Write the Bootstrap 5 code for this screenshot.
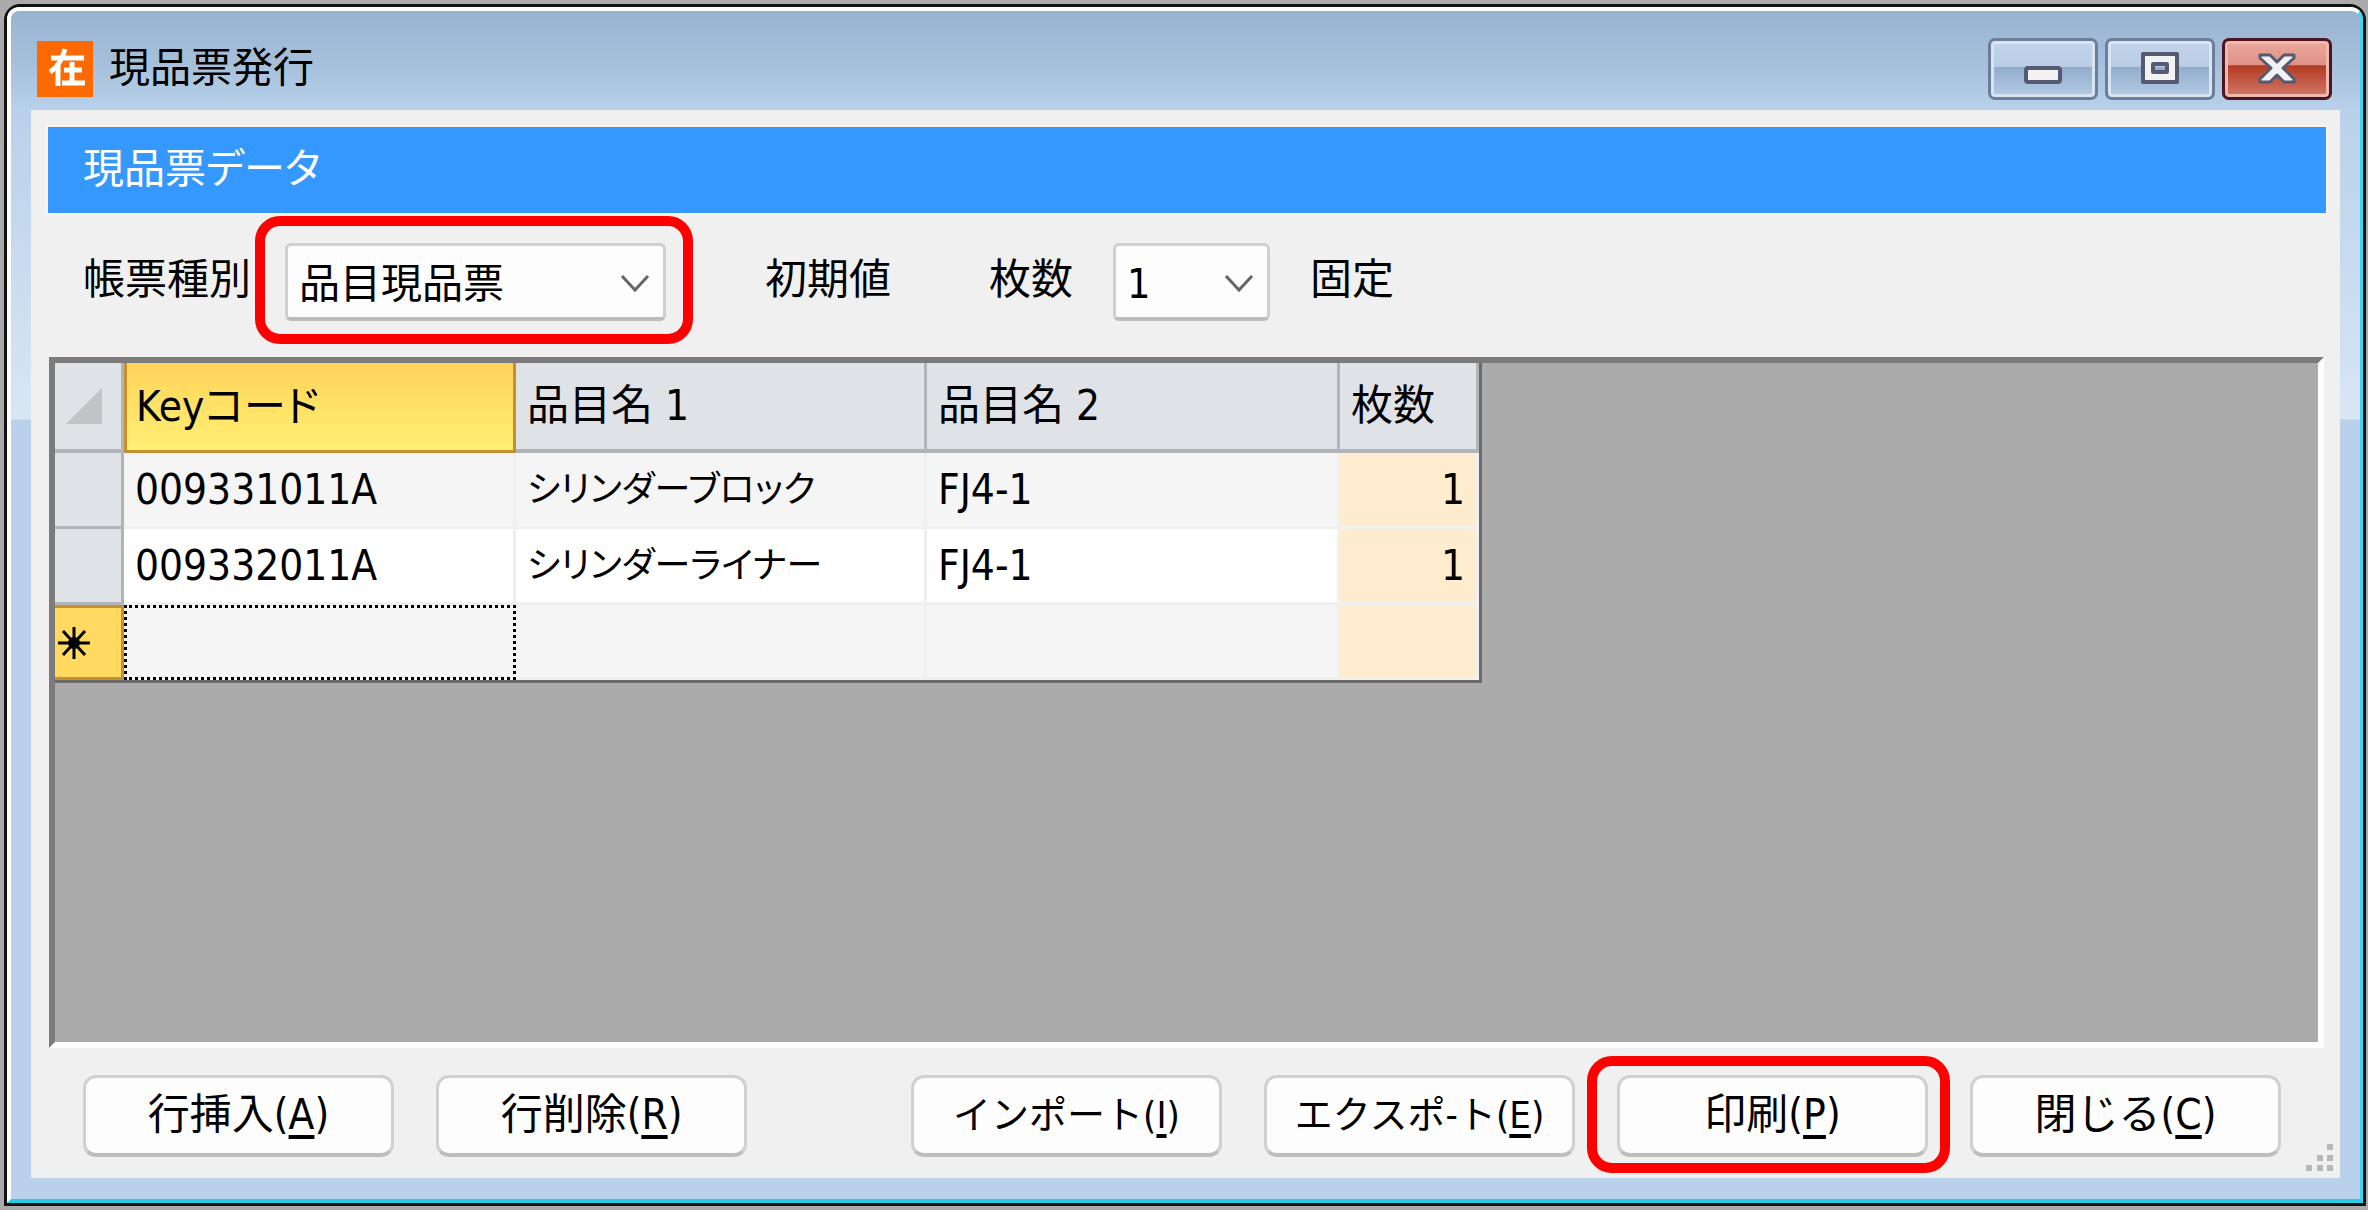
<!DOCTYPE html>
<html lang="ja">
<head>
<meta charset="utf-8">
<meta name="viewport" content="width=device-width, initial-scale=1">
<title>現品票発行</title>
<link rel="stylesheet" href="https://cdn.jsdelivr.net/npm/bootstrap@5.3.0/dist/css/bootstrap.min.css">
<style>
  body { background: #ababab; color: #000; font-family: "DejaVu Sans Condensed", "Noto Sans", "Noto Sans CJK JP", sans-serif; font-size: 42px; line-height: 50px; font-feature-settings: "palt"; }
  .desk { padding: 4px 2px 4px 4px; }
  .win { border: 3px solid #111; border-radius: 16px 16px 0 0; }
  .win-edge { border: 4px solid #fff; border-right: 3px solid #3fd6f5; border-bottom-color: #25cfe6; border-radius: 12px 12px 0 0; padding: 0 20px 21px 20px;
    background: linear-gradient(#99b4d1 0, #a5bfdb 50px, #b9d1ea 100px, #d9e6f4 408px, #b9d1ea 409px); }
  .titlebar { height: 99px; padding: 16px 8px 0 6px; }
  .win-title { font-size: 41px; }
  .app-icon { width: 56px; height: 56px; }
  .caption-btns { gap: 7px; }
  .cap-btn { width: 110px; height: 62px; padding: 0; border: 3px solid #6d7e9b; border-radius: 7px; box-shadow: inset 0 0 0 3px #d8e4f2;
    background: linear-gradient(#c2d4ea 0, #b9cde5 46%, #92adcb 47%, #b3cce6 100%); }
  .cap-btn svg, .app-icon, .row-mark { display: block; margin: 0 auto; }
  .cap-close { border-color: #4d1522; box-shadow: inset 0 0 0 3px #edb9b0;
    background: linear-gradient(#eaa99d 0, #df9286 43%, #b43a22 44%, #d17a68 100%); }
  .panel { background: #f0f0f0; padding: 17px 14px 0 17px; }
  .banner { background: #3498ff; color: #fff; height: 86px; padding-left: 35px; font-size: 41px; outline: 2px solid #fbf3e9; }
  .form-bar { height: 144px; padding: 2px 0 8px 35px; }
  .form-bar label, .form-bar > span { padding-bottom: 4px; }
  .combo select.form-select { width: 100%; height: 78px; padding: 4px 50px 0 11px; border: 3px solid #cfcfcf; border-bottom: 4px solid #bdbdbd; border-radius: 6px;
    background: #fdfdfd none; color: #000; font-size: 41px; line-height: 50px; }
  .combo svg { right: 16px; top: 31px; pointer-events: none; }
  .combo-kind { width: 381px; margin-left: 34px; }
  .combo-count { width: 157px; margin: 0 40px 0 40px; }
  .lbl-init { margin: 0 98px 0 99px; }
  .marked::after { content: ""; position: absolute; inset: -27px -27px -23px -30px; border: 10px solid #f00; border-radius: 25px; pointer-events: none; }
  .marked-btn::after { inset: -19px -22px -16px -30px; }
  .grid-view { background: #ababab; margin: 0 2px 0 1px; border-style: solid; border-width: 6px; border-color: #7b7b7b #fff #fff #7b7b7b; }
  .sheet { width: 1427px; table-layout: fixed; border-collapse: separate; border-spacing: 0; border-right: 3px solid #6b6b6b; border-bottom: 3px solid #6b6b6b; }
  .sheet th { font-weight: 400; }
  .sheet thead th { height: 90px; background: #dfe2e7; border-right: 3px solid #b1b5ba; border-bottom: 4px solid #b1b5ba; padding: 0 11px; }
  .sheet tbody th { height: 76px; background: #dfe2e7; border-right: 3px solid #b1b5ba; border-bottom: 3px solid #b1b5ba; padding: 0 3px; }
  .sheet tbody td { height: 76px; background: #f5f5f5; border-right: 3px solid #f0f0f0; border-bottom: 3px solid #f0f0f0; padding: 0 11px; }
  .sheet tbody td.kana { font-size: 36px; }
  .sheet tbody tr:nth-child(2) td { background: #fff; }
  .sheet tbody td.qty, .sheet tbody tr:nth-child(2) td.qty { background: #ffebcd; text-align: right; }
  .sheet thead th.key-head { background: linear-gradient(#ffd35a, #fff073); border: 3px solid #c68f2f; border-top: 0; padding-left: 9px; }
  .sheet tbody th.new-row { height: 75px; background: #ffd960; border-right-color: #c68f2f; border-top: 3px solid #c68f2f; border-bottom-color: #c68f2f; }
  .sheet tbody tr:last-child td { height: 75px; }
  .sheet tbody td.focus-cell { border: 3px dotted #000; }
  .foot { height: 130px; padding: 5px 45px 0 35px; gap: 42px; }
  .cmd { width: 311px; height: 82px; padding: 0; background: #fdfdfd; border: 3px solid #d0d0d0; border-bottom: 4px solid #bdbdbd; border-radius: 13px; font-size: 42px; line-height: 50px; color: #000; }
  .cmd-kana { font-size: 38px; }
  .cmd u { text-underline-offset: 6px; text-decoration-thickness: 4px; }
  .grip { right: 6px; bottom: 6px; }
</style>
</head>
<body>
<div class="desk min-vh-100 d-flex">
 <div class="win flex-grow-1 d-flex">
  <div class="win-edge flex-grow-1 d-flex flex-column">
   <header class="titlebar d-flex align-items-center">
    <svg class="app-icon m-0" viewBox="0 0 56 56" aria-hidden="true"><rect width="56" height="56" fill="#ff6a00"/><g fill="none" stroke="#fff" stroke-width="5"><path d="M14 17H47M28 8Q24 24 13 31M21 24V45M35 21V42M27 29H45M25 42H48"/></g></svg>
    <h1 class="win-title m-0 ms-3 fw-normal flex-grow-1">現品票発行</h1>
    <div class="caption-btns d-flex">
     <button class="cap-btn" type="button" aria-label="最小化"><svg width="40" height="36" viewBox="0 0 40 36"><rect x="3" y="17" width="34" height="14" rx="2" fill="#f2f2f2" stroke="#565a70" stroke-width="4"/></svg></button>
     <button class="cap-btn" type="button" aria-label="最大化"><svg width="40" height="36" viewBox="0 0 40 36"><path d="M3 3H37V31H3ZM13 13V21H27V13Z" fill="#f2f2f2" fill-rule="evenodd" stroke="#565a70" stroke-width="4" stroke-linejoin="round"/></svg></button>
     <button class="cap-btn cap-close" type="button" aria-label="閉じる"><svg width="40" height="36" viewBox="0 0 40 36"><path d="M3 4H13L20 11L27 4H37V7L26 17L37 28V31H27L20 24L13 31H3V28L14 17L3 7Z" fill="#f2f2f2" stroke="#565a70" stroke-width="3" stroke-linejoin="round"/></svg></button>
    </div>
   </header>
   <main class="panel flex-grow-1 d-flex flex-column position-relative">
    <h2 class="banner m-0 fw-normal d-flex align-items-center flex-shrink-0">現品票データ</h2>
    <form class="form-bar d-flex align-items-center flex-shrink-0">
     <label for="kind">帳票種別</label>
     <div class="combo combo-kind marked position-relative">
      <select class="form-select" id="kind"><option>品目現品票</option></select>
      <svg class="position-absolute" width="30" height="20" viewBox="0 0 30 20"><path d="M2 2L15 16L28 2" fill="none" stroke="#666" stroke-width="3"/></svg>
     </div>
     <span class="lbl-init">初期値</span>
     <label for="count">枚数</label>
     <div class="combo combo-count position-relative">
      <select class="form-select" id="count"><option>1</option></select>
      <svg class="position-absolute" width="30" height="20" viewBox="0 0 30 20"><path d="M2 2L15 16L28 2" fill="none" stroke="#666" stroke-width="3"/></svg>
     </div>
     <span>固定</span>
    </form>
    <div class="grid-view flex-grow-1">
     <table class="sheet">
      <colgroup><col style="width:69px"><col style="width:392px"><col style="width:411px"><col style="width:413px"><col style="width:139px"></colgroup>
      <thead>
       <tr>
        <th aria-label="全選択"><svg class="d-block" width="36" height="36" viewBox="0 0 36 36"><path d="M36 0V36H0Z" fill="#c0c4c7"/></svg></th>
        <th class="key-head" scope="col">Keyコード</th><th scope="col">品目名 1</th><th scope="col">品目名 2</th><th scope="col">枚数</th>
       </tr>
      </thead>
      <tbody>
       <tr><th></th><td>009331011A</td><td class="kana">シリンダーブロック</td><td>FJ4-1</td><td class="qty">1</td></tr>
       <tr><th></th><td>009332011A</td><td class="kana">シリンダーライナー</td><td>FJ4-1</td><td class="qty">1</td></tr>
       <tr><th class="new-row" aria-label="新しい行"><svg class="row-mark m-0" width="32" height="32" viewBox="0 0 32 32"><path d="M16 0V32M0 16H32M5 4L27 28M27 4L5 28" stroke="#000" stroke-width="3"/><circle cx="16" cy="16" r="6"/></svg></th><td class="focus-cell"></td><td></td><td></td><td class="qty"></td></tr>
      </tbody>
     </table>
    </div>
    <footer class="foot d-flex align-items-center flex-shrink-0">
     <button class="btn cmd" type="button">行挿入(<u>A</u>)</button>
     <button class="btn cmd" type="button">行削除(<u>R</u>)</button>
     <button class="btn cmd cmd-kana ms-auto" type="button">インポート(<u>I</u>)</button>
     <button class="btn cmd cmd-kana" type="button">エクスポ-ト(<u>E</u>)</button>
     <div class="marked marked-btn position-relative"><button class="btn cmd d-block" type="button">印刷(<u>P</u>)</button></div>
     <button class="btn cmd" type="button">閉じる(<u>C</u>)</button>
    </footer>
    <svg class="grip position-absolute" width="28" height="28" viewBox="0 0 28 28" aria-hidden="true"><path d="M21 0h6v6h-6zM11 11h6v6h-6zM21 11h6v6h-6zM0 21h6v6H0zM11 21h6v6h-6zM21 21h6v6h-6z" fill="#b8b8b8"/></svg>
   </main>
  </div>
 </div>
</div>
<script src="https://cdn.jsdelivr.net/npm/bootstrap@5.3.0/dist/js/bootstrap.bundle.min.js"></script>
</body>
</html>
